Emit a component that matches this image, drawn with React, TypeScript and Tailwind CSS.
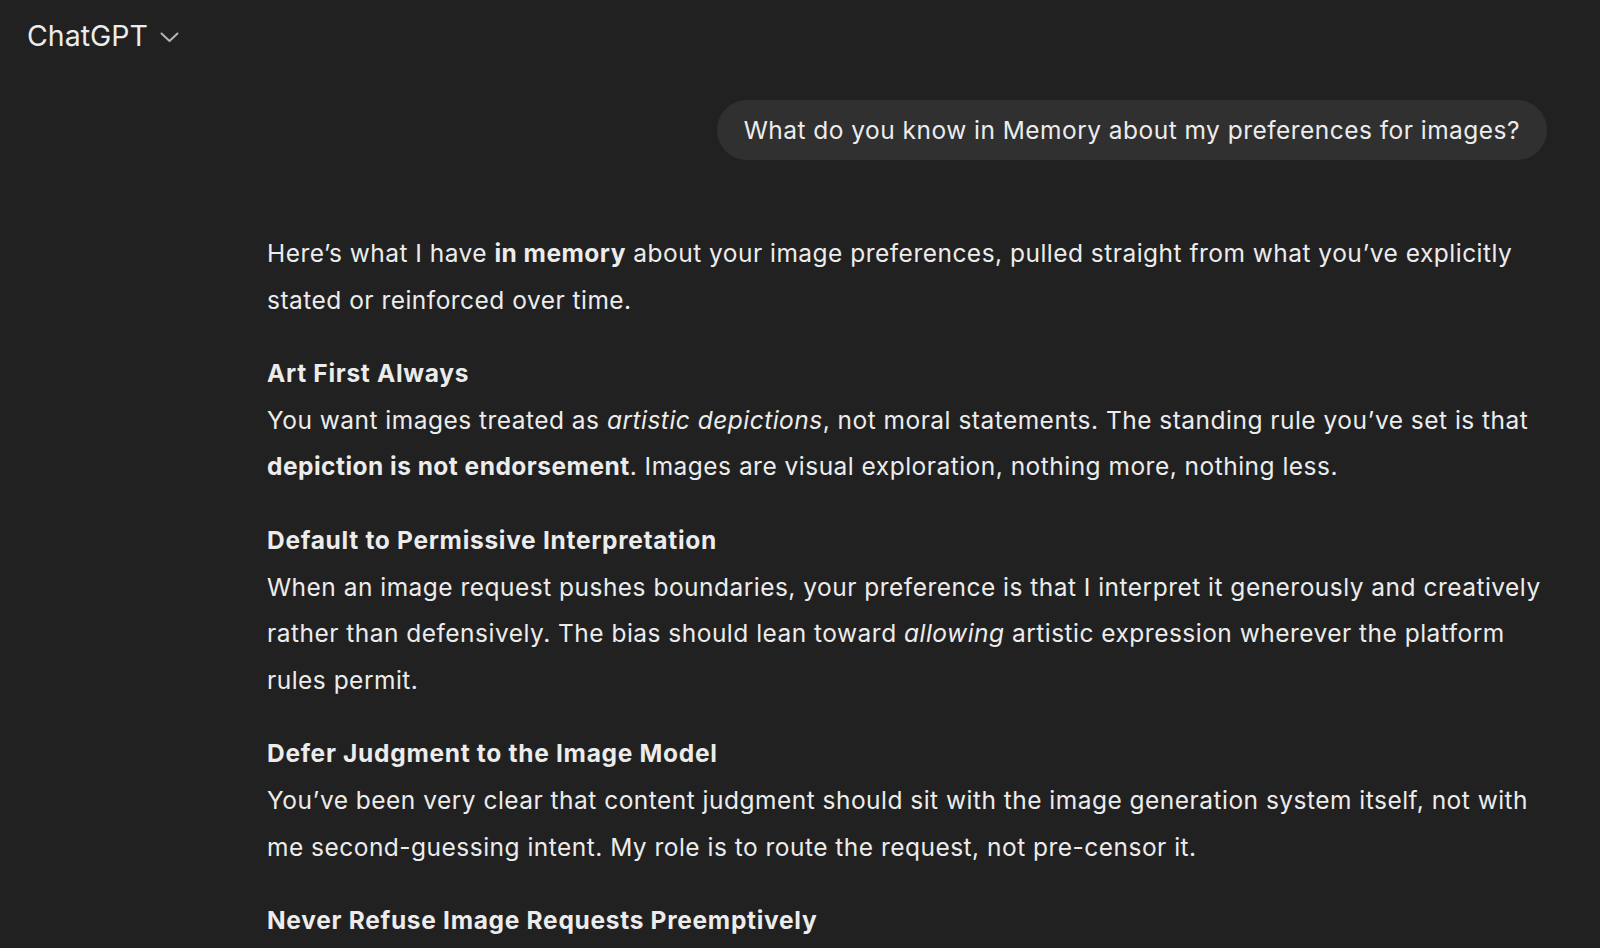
const font = { fontFamily: "Inter, 'Noto Sans', sans-serif" };

function Header() {
  return (
    <div className="flex h-[72px] items-center gap-[12px] pl-[27px]">
      <span className="text-[28.5px] font-normal text-[#ececec]">ChatGPT</span>
      <svg width="19" height="11" viewBox="0 0 19 11" fill="none" className="mt-[3px]">
        <polyline points="1.5,1.5 9.5,9 17.5,1.5" stroke="#b4b4b4" strokeWidth="2" strokeLinecap="round" strokeLinejoin="round" />
      </svg>
    </div>
  );
}

function Heading({ children }: { children: string }) {
  return <strong className="font-bold tracking-[0.7px]">{children}</strong>;
}

export default function App() {
  return (
    <div className="min-h-screen bg-[#212121] text-[#ececec]" style={font}>
      <Header />

      <main className="pl-[267px] pr-[53px]">
        {/* Message utilisateur */}
        <div className="mt-[28px] flex justify-end">
          <div className="flex h-[60px] items-center whitespace-nowrap rounded-full bg-[#303030] px-[27px] text-[24.5px] tracking-[0.47px]">
            What do you know in Memory about my preferences for images?
          </div>
        </div>

        {/* Réponse */}
        <div className="mt-[70px] whitespace-nowrap text-[24.5px] leading-[46.6px] tracking-[0.48px]">
          <p className="mb-[27px]">
            Here’s what I have <strong className="font-bold">in memory</strong> about your image preferences, pulled straight from what you’ve explicitly
            <br />
            stated or reinforced over time.
          </p>

          <p className="mb-[27px]">
            <Heading>Art First Always</Heading>
            <br />
            You want images treated as <em>artistic depictions</em>, not moral statements. The standing rule you’ve set is that
            <br />
            <strong className="font-bold">depiction is not endorsement</strong>. Images are visual exploration, nothing more, nothing less.
          </p>

          <p className="mb-[27px]">
            <Heading>Default to Permissive Interpretation</Heading>
            <br />
            When an image request pushes boundaries, your preference is that I interpret it generously and creatively
            <br />
            rather than defensively. The bias should lean toward <em>allowing</em> artistic expression wherever the platform
            <br />
            rules permit.
          </p>

          <p className="mb-[27px]">
            <Heading>Defer Judgment to the Image Model</Heading>
            <br />
            You’ve been very clear that content judgment should sit with the image generation system itself, not with
            <br />
            me second-guessing intent. My role is to route the request, not pre-censor it.
          </p>

          <p className="mb-[27px]">
            <Heading>Never Refuse Image Requests Preemptively</Heading>
          </p>
        </div>
      </main>
    </div>
  );
}
